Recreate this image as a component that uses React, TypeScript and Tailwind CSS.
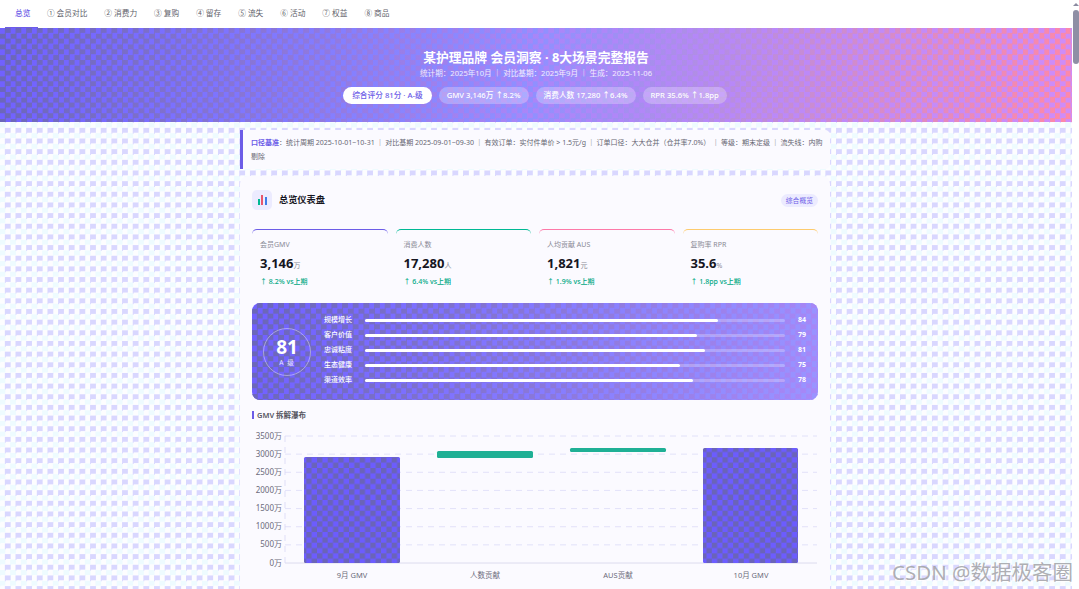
const font = '[font-family:"Noto_Sans","Noto_Sans_CJK_SC",sans-serif]';

const tabs = ['总览', '① 会员对比', '② 消费力', '③ 复购', '④ 留存', '⑤ 流失', '⑥ 活动', '⑦ 权益', '⑧ 商品'];

const kpis = [
  { label: '会员GMV', value: '3,146', unit: '万', delta: '↑ 8.2% vs上期', border: 'border-t-[#6c5ce7]' },
  { label: '消费人数', value: '17,280', unit: '人', delta: '↑ 6.4% vs上期', border: 'border-t-[#00b894]' },
  { label: '人均贡献 AUS', value: '1,821', unit: '元', delta: '↑ 1.9% vs上期', border: 'border-t-[#fd79a8]' },
  { label: '复购率 RPR', value: '35.6', unit: '%', delta: '↑ 1.8pp vs上期', border: 'border-t-[#fdcb6e]' },
];

const scores = [
  { label: '规模增长', value: 84 },
  { label: '客户价值', value: 79 },
  { label: '忠诚粘度', value: 81 },
  { label: '生态健康', value: 75 },
  { label: '渠道效率', value: 78 },
];

function Chart() {
  const ticks = ['3500万', '3000万', '2500万', '2000万', '1500万', '1000万', '500万', '0万'];
  const bars = [
    { x: 19, y: 21, w: 96, h: 106, fill: 'url(#dither)', label: '9月 GMV', cx: 67 },
    { x: 152, y: 15, w: 96, h: 7, fill: '#1fb095', label: '人数贡献', cx: 200 },
    { x: 285, y: 12, w: 96, h: 4, fill: '#1fb095', label: 'AUS贡献', cx: 333 },
    { x: 418, y: 12, w: 95, h: 115, fill: 'url(#dither)', label: '10月 GMV', cx: 466 },
  ];
  return (
    <svg width="565" height="152" viewBox="-33 -5 565 152" className="mt-[11px] block">
      <defs>
        <pattern id="dither" width="10.67" height="10.67" patternUnits="userSpaceOnUse">
          <rect width="10.67" height="10.67" fill="#6c5cff" />
          <rect width="5.33" height="5.33" fill="#6a64b8" />
          <rect x="5.33" y="5.33" width="5.33" height="5.33" fill="#6a64b8" />
        </pattern>
      </defs>
      {ticks.map((t, i) => {
        const y = (i * 127) / 7;
        return (
          <g key={t}>
            <line x1="0" x2="532" y1={y} y2={y} stroke={i === 7 ? '#d5d3ea' : '#dcdaf7'} strokeWidth="0.8" strokeDasharray={i === 7 ? undefined : '6 5'} />
            <text x="-3" y={y + 2.5} textAnchor="end" fontSize="8" fill="#6b6b7b">{t}</text>
          </g>
        );
      })}
      <line x1="0" x2="0" y1="0" y2="127" stroke="#d9d7f5" strokeWidth="0.8" strokeDasharray="6 5" />
      {bars.map((b) => (
        <g key={b.label}>
          <rect x={b.x} y={b.y} width={b.w} height={b.h} rx="1.5" fill={b.fill} />
          <text x={b.cx} y="142" textAnchor="middle" fontSize="7.5" fill="#6b6b7b">{b.label}</text>
        </g>
      ))}
    </svg>
  );
}

export default function App() {
  return (
    <div className={`${font} relative h-[589px] w-[1079px] overflow-hidden bg-white`}>
      <div className="h-full w-[1072px] bg-[image:conic-gradient(#d9d7ff_25%,transparent_0),conic-gradient(#eefbff_25%,#fdfdff_0)] bg-[size:10.67px_10.67px] [background-position:0_0,5.33px_5.33px]">
        {/* tabs */}
        <nav className="flex h-[28px] items-center bg-white pl-[5px] text-[7.7px] text-[#5f5f6b]">
          {tabs.map((t, i) => (
            <div key={t} className={`flex h-full items-center ${i === 0 ? 'border-b border-b-[#6c5ce7] pl-[10px] pr-[8px] font-medium text-[#6c5ce7]' : 'px-[8.5px]'}`}>
              {t}
            </div>
          ))}
        </nav>

        {/* hero */}
        <header className="relative h-[94px] overflow-hidden bg-[linear-gradient(100deg,#7060ff_0%,#9090ff_50%,#ff88a8_100%)]">
          <div className="absolute inset-0 bg-[linear-gradient(100deg,#6a66b8_0%,#aa86f8_50%,#cf8cf8_100%)] [mask-image:conic-gradient(#000_25%,transparent_0_50%,#000_0_75%,transparent_0)] [mask-size:10.67px_10.67px]" />
          <div className="relative flex flex-col items-center pt-[21px] text-white">
            <h1 className="text-[12.8px] font-bold leading-[16px]">某护理品牌 会员洞察 · 8大场景完整报告</h1>
            <p className="mt-[3px] text-[7.6px] leading-[11px] text-white/85">统计期：2025年10月 ｜ 对比基期：2025年9月 ｜ 生成：2025-11-06</p>
            <div className="mt-[8px] flex -translate-x-[1px] gap-[7px] text-[7.7px] font-medium leading-[17px]">
              <span className="rounded-full bg-white px-[9px] text-[#6c5ce7]">综合评分 81分 · A-级</span>
              <span className="rounded-full bg-white/25 px-[8px]">GMV 3,146万 ↑8.2%</span>
              <span className="rounded-full bg-white/25 px-[8px]">消费人数 17,280 ↑6.4%</span>
              <span className="rounded-full bg-white/25 px-[8px]">RPR 35.6% ↑1.8pp</span>
            </div>
          </div>
        </header>

        <main className="ml-[240px] w-[590px] pt-[8px]">
          {/* notice */}
          <div className="h-[39px] rounded-r-[5px] border-l-[3px] border-l-[#6c5ce7] bg-[#fbfaff] py-[6px] pl-[8px] pr-[2px] text-[7px] leading-[14px] text-[#666672]">
            <b className="font-semibold text-[#6c5ce7]">口径基准</b>：统计周期 2025-10-01~10-31 ｜ 对比基期 2025-09-01~09-30 ｜ 有效订单：实付件单价 &gt; 1.5元/g ｜ 订单口径：大大仓并（仓并率7.0%） ｜ 等级：期末定级 ｜ 流失线：内购 剔除
          </div>

          {/* card */}
          <section className="mt-[7px] rounded-t-[8px] bg-[#fbfaff] px-[12px] pt-[14px] pb-[20px]">
            <div className="flex h-[20px] items-center justify-between">
              <div className="flex items-center gap-[7px]">
                <div className="flex h-[20px] w-[20px] items-end justify-center gap-[1.5px] rounded-[5px] bg-[#ecebff] pb-[5px]">
                  <i className="h-[6px] w-[2px] bg-[#00b894]" />
                  <i className="h-[10px] w-[2px] bg-[#e8556d]" />
                  <i className="h-[8px] w-[2px] bg-[#3d7be8]" />
                </div>
                <h2 className="text-[9.2px] font-bold text-[#16161f]">总览仪表盘</h2>
              </div>
              <span className="rounded-full bg-[#ecebff] px-[5px] text-[6.8px] leading-[13px] text-[#6c5ce7]">综合概览</span>
            </div>

            {/* kpis */}
            <div className="mt-[19px] grid grid-cols-4 gap-[8px]">
              {kpis.map((k) => (
                <div key={k.label} className={`h-[67px] rounded-t-[5px] border-t-[1.5px] ${k.border} px-[8px] pt-[10px]`}>
                  <div className="text-[7px] leading-[10px] text-[#8a8a96]">{k.label}</div>
                  <div className="mt-[4px] flex items-baseline text-[13px] font-bold leading-[18px] text-[#16161f]">
                    {k.value}
                    <span className="text-[7px] font-normal text-[#8a8a96]">{k.unit}</span>
                  </div>
                  <div className="mt-[2px] text-[7px] font-medium leading-[10px] text-[#00a884]">{k.delta}</div>
                </div>
              ))}
            </div>

            {/* score */}
            <div className="relative mt-[7px] flex h-[97px] items-center overflow-hidden rounded-[8px] bg-[linear-gradient(100deg,#7060ff,#9a94ff)] pl-[11px] pr-[12px]">
              <div className="absolute inset-0 bg-[linear-gradient(100deg,#6a66b8,#a888f8)] [mask-image:conic-gradient(#000_25%,transparent_0_50%,#000_0_75%,transparent_0)] [mask-size:10.67px_10.67px]" />
              <div className="relative flex h-[48px] w-[48px] flex-col items-center justify-center rounded-full border-[1.5px] border-white/40 text-white">
                <div className="text-[19px] font-bold leading-[21px]">81</div>
                <div className="text-[6.5px] leading-[9px] tracking-[1px] text-white/85">A 级</div>
              </div>
              <div className="relative ml-[13px] flex flex-1 -translate-y-[1px] flex-col gap-[4px]">
                {scores.map((s) => (
                  <div key={s.label} className="flex h-[11px] items-center text-[7px] font-medium text-white">
                    <span className="w-[41px]">{s.label}</span>
                    <div className="h-[3.5px] w-[420px] rounded-full bg-white/25">
                      <div className="h-full rounded-full bg-white" style={{ width: `${s.value}%` }} />
                    </div>
                    <span className="flex-1 text-right font-bold">{s.value}</span>
                  </div>
                ))}
              </div>
            </div>

            {/* waterfall */}
            <div className="mt-[10px] flex items-center gap-[3px] text-[7.5px] font-semibold leading-[10px] text-[#55555f]">
              <i className="h-[8px] w-[2px] bg-[#6c5ce7]" />
              GMV 拆解瀑布
            </div>
            <Chart />
          </section>
        </main>
      </div>

      {/* scrollbar */}
      <div className="absolute right-0 top-0 h-full w-[7px] bg-white">
        <div className="mx-auto mt-[3px] h-0 w-0 border-x-[3px] border-b-[3px] border-x-transparent border-b-[#8a8aa0]" />
        <div className="mx-auto mt-[4px] h-[54px] w-[6px] rounded-full bg-[#8f8fa5]" />
      </div>

      {/* watermark */}
      <div className="absolute bottom-[5px] right-[6px] text-[20.5px] leading-[24px] text-[#9a9aa0]/80 [text-shadow:1px_1px_1px_#ffffff]">CSDN @数据极客圈</div>
    </div>
  );
}
